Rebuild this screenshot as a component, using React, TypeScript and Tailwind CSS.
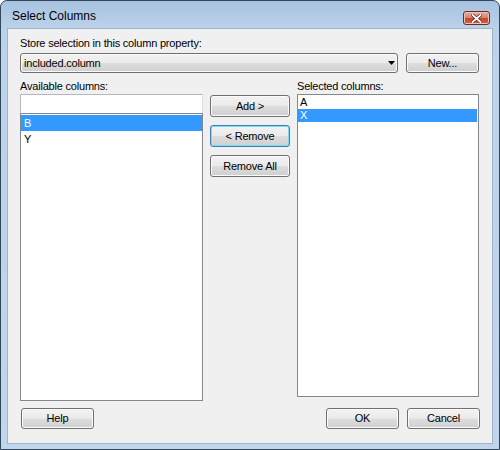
import React from "react";

const btn =
  "flex items-center justify-center rounded-[3px] border border-[#707070] bg-[linear-gradient(#f2f2f2_0%,#ebebeb_48%,#dddddd_52%,#cfcfcf_100%)] shadow-[inset_0_0_0_1px_#fbfbfb] text-black";

function Button({ label, className, focused }: { label: string; className?: string; focused?: boolean }) {
  return (
    <div
      className={
        focused
          ? "flex items-center justify-center rounded-[3px] border border-[#3c7fb1] bg-[linear-gradient(#f2f2f2_0%,#ebebeb_48%,#dddddd_52%,#cfcfcf_100%)] shadow-[inset_0_0_0_1px_#7edaf7] text-black " + (className ?? "")
          : btn + " " + (className ?? "")
      }
    >
      {label}
    </div>
  );
}

export default function App() {
  return (
    <div
      className="h-[450px] w-[500px] bg-white text-[11px] leading-[13px] tracking-[-0.2px] text-black"
      style={{ fontFamily: '"Liberation Sans", Arial, sans-serif' }}
    >
      <div className="flex h-[450px] w-[500px] flex-col rounded-t-[7px] border border-[#33475c] bg-[linear-gradient(#a7c2e0_0px,#bcd2ea_28px,#c1d6ec_100%)]">
        {/* title bar */}
        <div className="flex h-[27px] items-start">
          <div className="pl-[11px] pt-[8px] text-[12px] leading-[14px] tracking-normal text-black">Select Columns</div>
          <div className="ml-auto mr-[9px] mt-[10px] flex h-[14px] w-[27px] items-center justify-center rounded-[3px] border border-[#6e2a1f] bg-[linear-gradient(#e9b0a4_0%,#d88370_45%,#c4452c_55%,#d0674c_100%)] shadow-[inset_0_0_0_1px_#f0c0b4]">
            <svg width="11" height="9" viewBox="0 0 11 9">
              <path d="M1.5 1 L9.5 8 M9.5 1 L1.5 8" stroke="#4a2a24" strokeWidth="3.2" strokeLinecap="square" />
              <path d="M1.5 1 L9.5 8 M9.5 1 L1.5 8" stroke="#ffffff" strokeWidth="1.8" strokeLinecap="square" />
            </svg>
          </div>
        </div>

        {/* client area */}
        <div className="mx-[6px] mb-[5px] flex flex-1 flex-col border border-[#9fb3c9] bg-[#f0f0f0] px-[12px] pt-[8px]">
          <div className="h-[13px]">Store selection in this column property:</div>
          <div className="mt-[3px] flex gap-[8px]">
            <div className={btn + " h-[20px] w-[378px] !justify-start pl-[3px]"}>
              <span>included.column</span>
              <svg className="ml-auto mr-[2px]" width="7" height="4" viewBox="0 0 7 4">
                <path d="M0 0 H7 L3.5 4 Z" fill="#000" />
              </svg>
            </div>
            <Button label="New..." className="h-[20px] w-[73px]" />
          </div>

          <div className="mt-[7px] grid grid-cols-[183px_80px_182px] gap-x-[7px]">
            <div className="h-[13px]">Available columns:</div>
            <div />
            <div className="h-[13px]">Selected columns:</div>

            {/* left */}
            <div className="mt-[1px] flex h-[307px] flex-col">
              <div className="h-[19px] border border-b-0 border-[#b5b8bf] border-r-[#dcdfe4] bg-white" />
              <div className="flex-1 border border-[#828790] bg-white pt-[1px]">
                <div className="h-[16px] bg-[#3399ff] pl-[3px] leading-[16px] text-white">B</div>
                <div className="h-[16px] pl-[3px] leading-[16px]">Y</div>
              </div>
            </div>

            {/* middle buttons */}
            <div className="mt-[2px] flex flex-col gap-[8px]">
              <Button label="Add >" className="h-[22px] w-[80px]" />
              <Button label="< Remove" className="h-[22px] w-[80px]" focused />
              <Button label="Remove All" className="h-[22px] w-[80px]" />
            </div>

            {/* right */}
            <div className="mt-[1px] h-[303px] border border-[#828790] bg-white pr-[1px]">
              <div className="h-[14px] pl-[2px] leading-[14px]">A</div>
              <div className="h-[13px] bg-[#3399ff] pl-[2px] leading-[13px] text-white">X</div>
            </div>
          </div>

          <div className="mt-[7px] flex gap-[8px]">
            <Button label="Help" className="ml-[1px] h-[21px] w-[73px]" />
            <div className="flex-1" />
            <Button label="OK" className="h-[21px] w-[73px]" />
            <Button label="Cancel" className="h-[21px] w-[73px]" />
          </div>
        </div>
      </div>
    </div>
  );
}
